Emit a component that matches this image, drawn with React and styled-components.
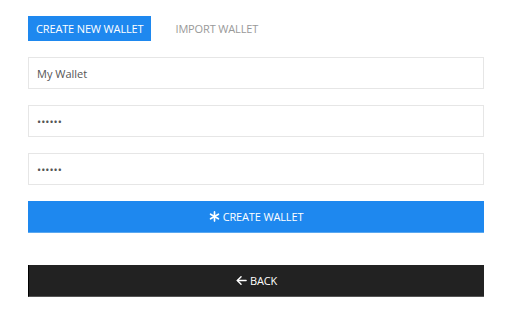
import React from 'react';
import styled, { createGlobalStyle } from 'styled-components';

const GlobalStyle = createGlobalStyle`
  body {
    margin: 0;
    background: #fff;
    font-family: "Open Sans", "Noto Sans", sans-serif;
  }
`;

const Page = styled.div`
  padding: 16px 28px;
  display: flex;
  flex-direction: column;
`;

const Tabs = styled.div`
  display: flex;
  margin-bottom: 16px;
`;

const Tab = styled.button`
  height: 25px;
  padding: 0 8px;
  border: none;
  font-family: inherit;
  font-size: 11px;
  letter-spacing: -0.15px;
  background: ${({ $active }) => ($active ? '#1e88ef' : 'transparent')};
  color: ${({ $active }) => ($active ? '#fff' : '#999')};
  margin-right: ${({ $active }) => ($active ? '16px' : '0')};
`;

const Form = styled.div`
  display: flex;
  flex-direction: column;
  gap: 16px;
`;

const Input = styled.input`
  box-sizing: border-box;
  height: 32px;
  width: 100%;
  border: 1px solid #e6e6e6;
  padding: 0 8px;
  font-family: inherit;
  font-size: 11px;
  color: #555;
  outline: none;
`;

const ActionButton = styled.button`
  box-sizing: border-box;
  height: 32px;
  width: 100%;
  border: none;
  font-family: inherit;
  font-size: 11px;
  letter-spacing: -0.15px;
  color: #fff;
  display: flex;
  align-items: center;
  justify-content: center;
  gap: 3px;
  background: ${({ $variant }) => ($variant === 'dark' ? '#222' : '#1e88ef')};
  border-bottom: 1px solid ${({ $variant }) => ($variant === 'dark' ? '#555' : '#5aa8f0')};
  border-left: ${({ $variant }) => ($variant === 'dark' ? '1px solid #000' : 'none')};
  margin-top: ${({ $gap }) => $gap || '0'};
`;

const Icon = styled.svg`
  width: 11px;
  height: 11px;
`;

const App = () => (
  <>
    <GlobalStyle />
    <Page>
      <Tabs>
        <Tab $active>CREATE NEW WALLET</Tab>
        <Tab>IMPORT WALLET</Tab>
      </Tabs>
      <Form>
        <Input defaultValue="My Wallet" />
        <Input type="password" defaultValue="123456" />
        <Input type="password" defaultValue="123456" />
        <ActionButton>
          <Icon viewBox="0 0 12 12">
            <g stroke="#fff" strokeWidth="1.8" strokeLinecap="round">
              <line x1="6" y1="1" x2="6" y2="11" />
              <line x1="1.7" y1="3.5" x2="10.3" y2="8.5" />
              <line x1="1.7" y1="8.5" x2="10.3" y2="3.5" />
            </g>
          </Icon>
          CREATE WALLET
        </ActionButton>
      </Form>
      <ActionButton $variant="dark" $gap="32px">
        <Icon viewBox="0 0 12 12">
          <g stroke="#fff" strokeWidth="1.6" fill="none" strokeLinecap="round" strokeLinejoin="round">
            <line x1="1.5" y1="6" x2="11" y2="6" />
            <polyline points="5.5,2 1.5,6 5.5,10" />
          </g>
        </Icon>
        BACK
      </ActionButton>
    </Page>
  </>
);

export default App;
